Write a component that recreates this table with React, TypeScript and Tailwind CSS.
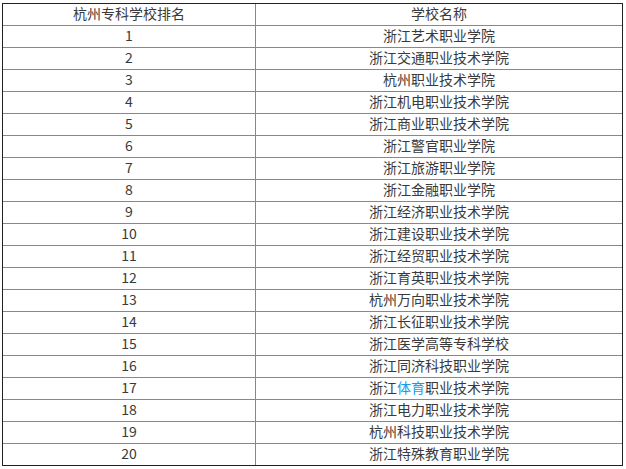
import React from "react";

const schools: React.ReactNode[] = [
  "浙江艺术职业学院",
  "浙江交通职业技术学院",
  "杭州职业技术学院",
  "浙江机电职业技术学院",
  "浙江商业职业技术学院",
  "浙江警官职业学院",
  "浙江旅游职业学院",
  "浙江金融职业学院",
  "浙江经济职业技术学院",
  "浙江建设职业技术学院",
  "浙江经贸职业技术学院",
  "浙江育英职业技术学院",
  "杭州万向职业技术学院",
  "浙江长征职业技术学院",
  "浙江医学高等专科学校",
  "浙江同济科技职业学院",
  <>
    浙江<span className="text-[#1a9be6]">体育</span>职业技术学院
  </>,
  "浙江电力职业技术学院",
  "杭州科技职业技术学院",
  "浙江特殊教育职业学院",
];

function Row({ left, right, first }: { left: React.ReactNode; right: React.ReactNode; first?: boolean }) {
  return (
    <div className={"flex h-[22px] " + (first ? "" : "border-t border-[#888888]")}>
      <div className="w-[253px] border-r border-[#888888] flex items-center justify-center pb-[3px]">{left}</div>
      <div className="flex-1 flex items-center justify-center pb-[3px]">{right}</div>
    </div>
  );
}

export default function App() {
  return (
    <div className="w-[626px] h-[469px] bg-white pt-[3px] pl-[2px]">
      <div
        className="w-[621px] border border-[#222222] text-[14px] leading-[20px] text-[#3a3a3a]"
        style={{ fontFamily: '"Noto Sans CJK SC", "Noto Sans", sans-serif' }}
      >
        <div className="flex h-[21px]">
          <div className="w-[253px] border-r border-[#888888] flex items-center justify-center pb-[3px]">杭州专科学校排名</div>
          <div className="flex-1 flex items-center justify-center pb-[3px]">学校名称</div>
        </div>
        {schools.map((s, i) => (
          <Row key={i} left={String(i + 1)} right={s} />
        ))}
      </div>
    </div>
  );
}
